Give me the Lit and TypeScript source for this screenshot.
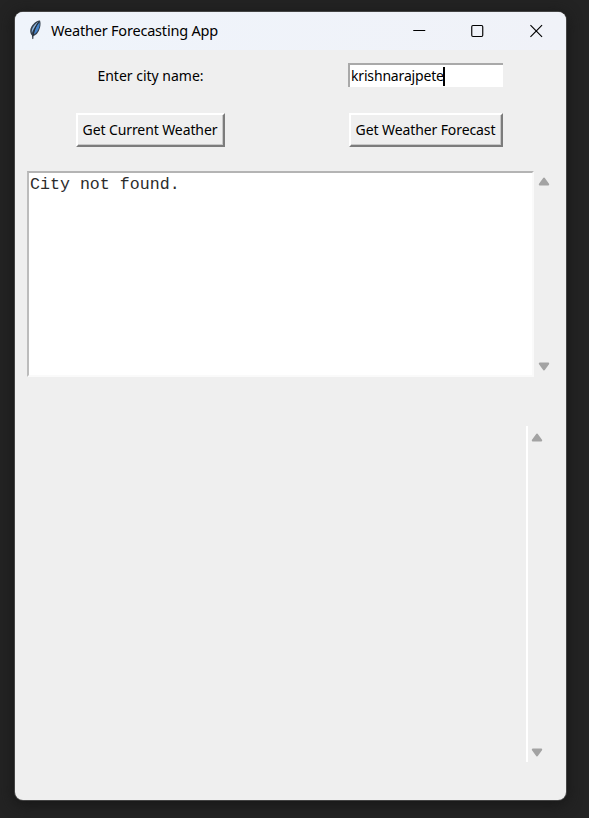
import { LitElement, html, css } from "lit";
import { customElement, property } from "lit/decorators.js";

@customElement("scroll-arrows")
class ScrollArrows extends LitElement {
  static styles = css`
    :host { display: flex; flex-direction: column; justify-content: space-between; width: 12px; }
    svg { display: block; width: 12px; height: 9px; fill: #a3a3a3; stroke: #a3a3a3; stroke-width: 2; stroke-linejoin: round; }
  `;
  render() {
    return html`
      <svg viewBox="0 0 12 9"><path d="M6 1.6 10.2 7.4H1.8Z" /></svg>
      <svg viewBox="0 0 12 9"><path d="M1.8 1.6H10.2L6 7.4Z" /></svg>
    `;
  }
}

@customElement("tk-button")
class TkButton extends LitElement {
  @property() label = "";
  static styles = css`
    :host { display: block; }
    button {
      display: flex; align-items: center; justify-content: center;
      box-sizing: border-box; width: 100%; height: 100%; padding: 0 1px 0 0; margin: 0;
      border: 2px solid; border-color: #fff #7c7c7c #7c7c7c #fff;
      box-shadow: inset -1px -1px #c8c8c8;
      background: #efefef; color: #000; border-radius: 0;
      font: 14px/20px "Noto Sans", sans-serif; letter-spacing: -0.1px; white-space: nowrap;
    }
  `;
  render() {
    return html`<button>${this.label}</button>`;
  }
}

@customElement("app-root")
class AppRoot extends LitElement {
  static styles = css`
    :host {
      display: block; box-sizing: border-box; width: 589px; height: 818px;
      padding: 12px 23px 18px 15px; background: #232323; overflow: hidden;
      font-family: "Noto Sans", sans-serif; color: #000;
    }
    .window {
      display: flex; flex-direction: column; width: 551px; height: 788px;
      background: #efefef; border-radius: 8px; overflow: hidden;
      box-shadow: 0 0 0 1px #444, 0 3px 14px 2px #181818;
    }
    .titlebar {
      display: flex; align-items: center; flex: none; height: 38px;
      padding-left: 12px; background: linear-gradient(90deg, #eff4fb, #f0f2f8);
    }
    .feather { width: 16px; height: 22px; margin: 0 8px 2px 0; }
    .title { font-size: 14.5px; line-height: 20px; letter-spacing: -0.2px; white-space: nowrap; flex: 1; padding-bottom: 2px; }
    .controls { display: flex; padding-right: 5px; }
    .controls svg { display: block; width: 58.5px; height: 38px; fill: none; stroke: #000; stroke-width: 1.15; }
    .form {
      display: grid; grid-template-columns: 149px 155px; column-gap: 123px;
      grid-template-rows: 25px 34px; row-gap: 25px; padding: 13px 0 0 61px;
    }
    .label { justify-self: center; font-size: 14px; line-height: 25px; letter-spacing: 0; white-space: nowrap; }
    .entry {
      display: flex; align-items: center; box-sizing: border-box; height: 24px; background: #fff;
      border-top: 2px solid #a9a9a9; border-left: 2px solid #a9a9a9;
      font-size: 14px; line-height: 20px; letter-spacing: -0.17px; padding-left: 1px;
    }
    .caret { width: 2px; height: 19px; background: #000; margin-left: -1px; }
    .forecast { margin-left: 1px; }
    .output { display: flex; height: 206px; padding: 24px 0 0 12px; }
    .text {
      box-sizing: border-box; width: 507px; height: 206px; background: #fff;
      border: 2px solid; border-color: #b4b4b4 #fafafa #fafafa #bcbcbc;
      font: 16.6px/20px "Liberation Mono", monospace; letter-spacing: 0.02px; color: #2c2c2c; padding: 2px 0 0 1px;
    }
    .output scroll-arrows { margin: 6px 0 0 3.5px; height: 194px; }
    .canvas { display: flex; height: 336px; margin-top: 49px; padding-left: 511px; }
    .edge { width: 1.5px; background: #fff; }
    .canvas scroll-arrows { margin: 7px 0 5px 3.5px; height: 324px; }
  `;
  render() {
    return html`
      <div class="window">
        <div class="titlebar">
          <svg class="feather" viewBox="0 0 16 22">
            <path d="M5.5 20.5 5 16.5C2 13 3 8.5 6.5 5 8.5 2.5 11 1.3 13 1.5 14.4 5 13 11.5 9.8 15 8.2 16.4 7 16.8 6.2 16.8Z" fill="#34404d" />
            <path d="M4.9 14C4 10.5 6.6 6 11.4 2.8 9 6.5 6.3 10 4.9 14Z" fill="#8cb5df" />
            <path d="M6.8 14.8C8 10 10.2 6 12.6 3.2 13 7.5 11.3 12 8 14.8Z" fill="#4484cc" />
            <path d="M11.5 3.5C8.5 7 6.4 12 5.8 20" fill="none" stroke="#1c242e" stroke-width="0.8" />
          </svg>
          <span class="title">Weather Forecasting App</span>
          <div class="controls">
            <svg viewBox="0 0 58 38"><path d="M27 18.5H39" /></svg>
            <svg viewBox="0 0 58 38"><rect x="27.5" y="13.5" width="11" height="11" rx="1.2" /></svg>
            <svg viewBox="0 0 58 38"><path d="M27.2 13.2 38.8 24.8M38.8 13.2 27.2 24.8" /></svg>
          </div>
        </div>
        <div class="form">
          <span class="label">Enter city name:</span>
          <div class="entry"><span>krishnarajpete</span><i class="caret"></i></div>
          <tk-button label="Get Current Weather"></tk-button>
          <tk-button class="forecast" label="Get Weather Forecast"></tk-button>
        </div>
        <div class="output">
          <div class="text">City not found.</div>
          <scroll-arrows></scroll-arrows>
        </div>
        <div class="canvas">
          <div class="edge"></div>
          <scroll-arrows></scroll-arrows>
        </div>
      </div>
    `;
  }
}
